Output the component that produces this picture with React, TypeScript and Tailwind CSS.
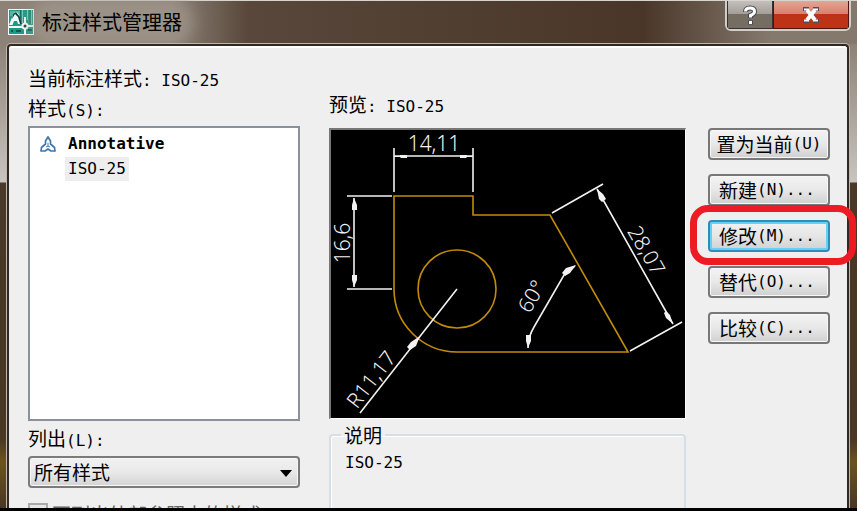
import React, { useState } from 'react';

const styles = ['Annotative', 'ISO-25'];

const actions = [
  { label: '置为当前', key: '(U)' },
  { label: '新建', key: '(N)...' },
  { label: '修改', key: '(M)...' },
  { label: '替代', key: '(O)...' },
  { label: '比较', key: '(C)...' },
];

const Mono: React.FC<{ children: React.ReactNode }> = ({ children }) => (
  <span className="font-['DejaVu_Sans_Mono',monospace] text-base leading-none">{children}</span>
);

const AppIcon = () => (
  <svg viewBox="0 0 26 26" className="h-[26px] w-[26px] shrink-0">
    <rect width="26" height="26" fill="#f4faf8" />
    <rect x="1" y="1" width="24" height="24" fill="#1d9a86" />
    <path d="M2 2h10v5H2z" fill="#52b9a5" />
    <path d="M14.500 1v13M19.500 1v10M23.500 1v14" stroke="#7fcdbf" strokeWidth="1" />
    <path d="M12.500 1v14M22 1v14" stroke="#0f6f64" strokeWidth="1" />
    <path d="M1 16L5 6Q6 3 8 3T11 6L14 15H10L9 12H6L4.500 16z" fill="#f4faf8" />
    <path d="M5 5L8 3L12 8L14 15H12L10 8L7 5L4 10z" fill="#12433f" />
    <path d="M1 18h13M19 17h6M17 19v6M17 8v7" stroke="#f4faf8" strokeWidth="2" />
    <circle cx="17" cy="17" r="2.500" fill="#12433f" stroke="#f4faf8" strokeWidth="2" />
    <path d="M3 22h2M8 22h5M20 21h4" stroke="#0b5b55" strokeWidth="2" />
  </svg>
);

const AnnotativeIcon = () => (
  <svg viewBox="0 0 18 18" className="h-[18px] w-[18px] shrink-0" fill="none" stroke="#3f76b0" strokeWidth="1.700" strokeLinejoin="round">
    <path d="M9 2L11.500 6L11.500 9L15.500 12.500L16 16H12L9 14L6 16H2L2.500 12.500L6.500 9V6Z" />
    <path d="M9 8v3M7 12l2-1 2 1" strokeWidth="1" />
  </svg>
);

const Preview = () => (
  <svg viewBox="0 0 354 288" className="block w-full bg-black" fill="none" role="img" aria-label="ISO-25">
    <g stroke="#c28c0a" strokeWidth="1.600">
      <path d="M63 66H142V85H219L297 222H126A63 63 0 0 1 63 159Z" />
      <circle cx="126" cy="159" r="39" />
    </g>
    <g stroke="#f2f2f2" strokeWidth="1.600">
      <path d="M63 18V62M142 18V62M63 26H142" />
      <path d="M16 66H61M16 159H61M23 68V157" />
      <path d="M221 83L272 54M299 221L351 192M266 59L342 194" />
      <path d="M126 159L29 283" />
      <path d="M197 218Q197 207 203 197L233 145L244 136" />
    </g>
    <g fill="#f2f2f2">
      <path d="M64 26h5v-1h7v3h-6l-1-1h-5zM141 26h-5v-1h-7v3h6l1-1h5zM23 68l-2 7v5h5v-5zM23 157l-2-7v-5h5v5z" />
      <path d="M266 59l2 10 3 3 4-3-3-5zM342 194l-3-9-4-4-2 2 2 5z" />
      <path d="M89 206l-9 6-4 5 3 3 6-4zM245 135l-10 3-4 5 3 3 5-3zM197 218l-2-7v-6h5v6z" />
    </g>
    <g fill="#f2f2f2" fontFamily="'Noto Sans', sans-serif" fontSize="21" fontWeight="300" textAnchor="middle">
      <text x="103" y="21">14,11</text>
      <text transform="translate(19 113) rotate(-90)">16,6</text>
      <text transform="translate(46 254) rotate(-52)">R11,17</text>
      <text transform="translate(309 124) rotate(60)">28,07</text>
      <text transform="translate(207 170) rotate(-60)">60°</text>
    </g>
  </svg>
);

const TitleBar = () => (
  <header className="flex h-11 items-start justify-between border-t border-[#d7d3ce] pl-2 pr-[6px]">
    <div className="flex items-center gap-2 pt-2">
      <AppIcon />
      <h1 className="rounded-full bg-[#a59c93]/60 text-[20px] leading-6 text-black shadow-[0_0_14px_12px_#a59c9399]">标注样式管理器</h1>
    </div>
    <div className="flex h-[30px] overflow-hidden rounded-b-md border-2 border-t-0 border-[#d3cdc7] bg-[#2c241f]">
      <button aria-label="帮助" className="flex w-[46px] items-center justify-center border border-t-0 border-[#363334] bg-linear-to-b from-[#c4bfbb] via-[#a39c97] via-50% to-[#766d62] to-50%">
        <svg viewBox="0 0 14 20" className="h-5 w-[14px]" fill="none">
          <path d="M2.500 7Q2.500 3 7 3T11.500 6.500Q11.500 9 7.500 10.500V13M7.500 15.500v4" stroke="#454857" strokeWidth="5" />
          <path d="M2.500 6.500Q2.500 3 7 3T11.500 6.500Q11.500 9 7.500 10.500V12.500M7.500 16v3" stroke="#fff" strokeWidth="3" />
        </svg>
      </button>
      <button aria-label="关闭" className="flex w-[76px] items-center justify-center border border-t-0 border-[#51140d] bg-linear-to-b from-[#e2a595] via-[#d5806c] via-50% to-[#bd3318] to-50%">
        <svg viewBox="0 0 18 16" className="h-4 w-[18px]" fill="none">
          <path d="M4 2L14 14M14 2L4 14M1 2h6M11 2h6M1 14h6M11 14h6" stroke="#55495a" strokeWidth="4" />
          <path d="M5 3L13 13M13 3L5 13" stroke="#fff" strokeWidth="4" />
          <path d="M2 2.500h5M11 2.500h5M2 13.500h5M11 13.500h5" stroke="#fff" strokeWidth="2" />
        </svg>
      </button>
    </div>
  </header>
);

const App = () => {
  const [selected, setSelected] = useState('ISO-25');

  return (
    <div className="flex h-screen flex-col overflow-hidden border-b-[3px] border-black bg-[linear-gradient(90deg,#8d8277_0%,#8d8277_20%,#58473a_29%,#493628_75%,#85796e_90%)] font-['Noto_Sans_CJK_SC',sans-serif] text-[19px] leading-6 text-black">
      <TitleBar />
      <div className="flex min-h-0 flex-1 bg-[linear-gradient(#8d8277_0,#c8c4bf_138px,#4a3828_139px,#493724_85%,#6b531f_90%,#493724_100%)] pl-[7px] pr-2">
        <main className="flex min-w-0 flex-1 items-start rounded-t-sm border-2 border-b-0 border-[#302821] bg-[#efefef] pl-[19px] pr-[17px] pt-[17px] shadow-[0_0_0_1px_#bdb6ae,inset_0_2px_0_0_#ffffff]">
          <section className="flex w-[272px] shrink-0 flex-col">
            <p className="whitespace-nowrap leading-[30px]">当前标注样式<Mono>: ISO-25</Mono></p>
            <h2 id="styles" className="leading-[30px]">样式<Mono>(S):</Mono></h2>
            <ul aria-labelledby="styles" className="mt-[3px] h-[295px] border-2 border-[#8b909c] bg-white pt-[3px]">
              {styles.map(name => (
                <li key={name}>
                  <button onClick={() => setSelected(name)} className="flex h-[25px] items-center gap-2 pl-[9px] leading-none">
                    {name === 'Annotative' ? <AnnotativeIcon /> : <span className="w-[18px]" />}
                    <span
                      className={
                        name === selected
                          ? "bg-[#eeeeee] px-[3px] font-['DejaVu_Sans_Mono',monospace] text-base leading-6"
                          : "px-[3px] font-['DejaVu_Sans_Mono',monospace] text-base font-bold leading-6"
                      }
                    >
                      {name}
                    </span>
                  </button>
                </li>
              ))}
            </ul>
            <label htmlFor="filter" className="pb-[5px] pt-1 leading-[26px]">列出<Mono>(L):</Mono></label>
            <div className="relative">
              <select id="filter" className="h-8 w-full appearance-none rounded-[4px] border-2 border-[#7b7b7b] bg-linear-to-b from-[#f1f1f1] via-[#e9e9e9] via-50% to-[#d4d4d4] pl-1 leading-6 shadow-[inset_0_0_0_1px_#f7f7f7] outline-none">
                <option>所有样式</option>
                <option>正在使用的样式</option>
              </select>
              <svg viewBox="0 0 12 7" className="pointer-events-none absolute right-2 top-[14px] h-[7px] w-3">
                <path d="M0 0h12L6 7z" />
              </svg>
            </div>
            <label className="flex items-start gap-1 whitespace-nowrap pt-[14px] text-[#666666]">
              <input type="checkbox" disabled className="mt-px h-5 w-5 appearance-none border-2 border-[#aaaaaa] bg-[#e8e8e8]" />
              <span>不列出外部参照中的样式<Mono>(D)</Mono></span>
            </label>
          </section>

          <section className="ml-[29px] min-w-0 flex-1 pt-[26px]">
            <h2 className="pb-[9px] leading-[30px]">预览<Mono>: ISO-25</Mono></h2>
            <div className="border-2 border-b border-r border-[#777777] border-b-white border-r-white">
              <Preview />
            </div>
            <fieldset className="mt-[3px] h-40 rounded-[4px] border-2 border-[#d5dfe5] pl-[14px] shadow-[inset_1px_1px_0_0_#ffffff]">
              <legend className="-ml-1 px-[3px] leading-[26px]">说明</legend>
              <p className="leading-6"><Mono>ISO-25</Mono></p>
            </fieldset>
          </section>

          <nav className="ml-[22px] mt-[65px] flex w-[122px] shrink-0 flex-col gap-[14px]">
            {actions.map(({ label, key }) => (
              <div key={label} className="relative">
                <button
                  className={
                    label === '修改'
                      ? 'flex h-8 w-full items-center whitespace-nowrap rounded-[4px] border-2 border-[#318bb7] bg-linear-to-b from-[#f1f1f1] via-[#e6e6e6] via-50% to-[#d0d0d0] pl-[9px] shadow-[inset_0_0_0_2px_#65cff5]'
                      : label === '置为当前'
                        ? 'flex h-8 w-full items-center justify-center whitespace-nowrap rounded-[4px] border-2 border-[#777777] bg-linear-to-b from-[#f3f3f3] via-[#e8e8e8] via-50% to-[#d0d0d0] shadow-[inset_0_0_0_1px_#f7f7f7]'
                        : 'flex h-8 w-full items-center whitespace-nowrap rounded-[4px] border-2 border-[#777777] bg-linear-to-b from-[#f3f3f3] via-[#e8e8e8] via-50% to-[#d0d0d0] pl-[9px] shadow-[inset_0_0_0_1px_#f7f7f7]'
                  }
                >
                  {label}<Mono>{key}</Mono>
                </button>
                {label === '修改' && (
                  <div className="pointer-events-none absolute -inset-x-[18px] -bottom-[13px] -top-[15px] z-10 -mr-2 rounded-[18px] border-[7px] border-[#ed1c24]" />
                )}
              </div>
            ))}
          </nav>
        </main>
      </div>
    </div>
  );
};

export default App;
